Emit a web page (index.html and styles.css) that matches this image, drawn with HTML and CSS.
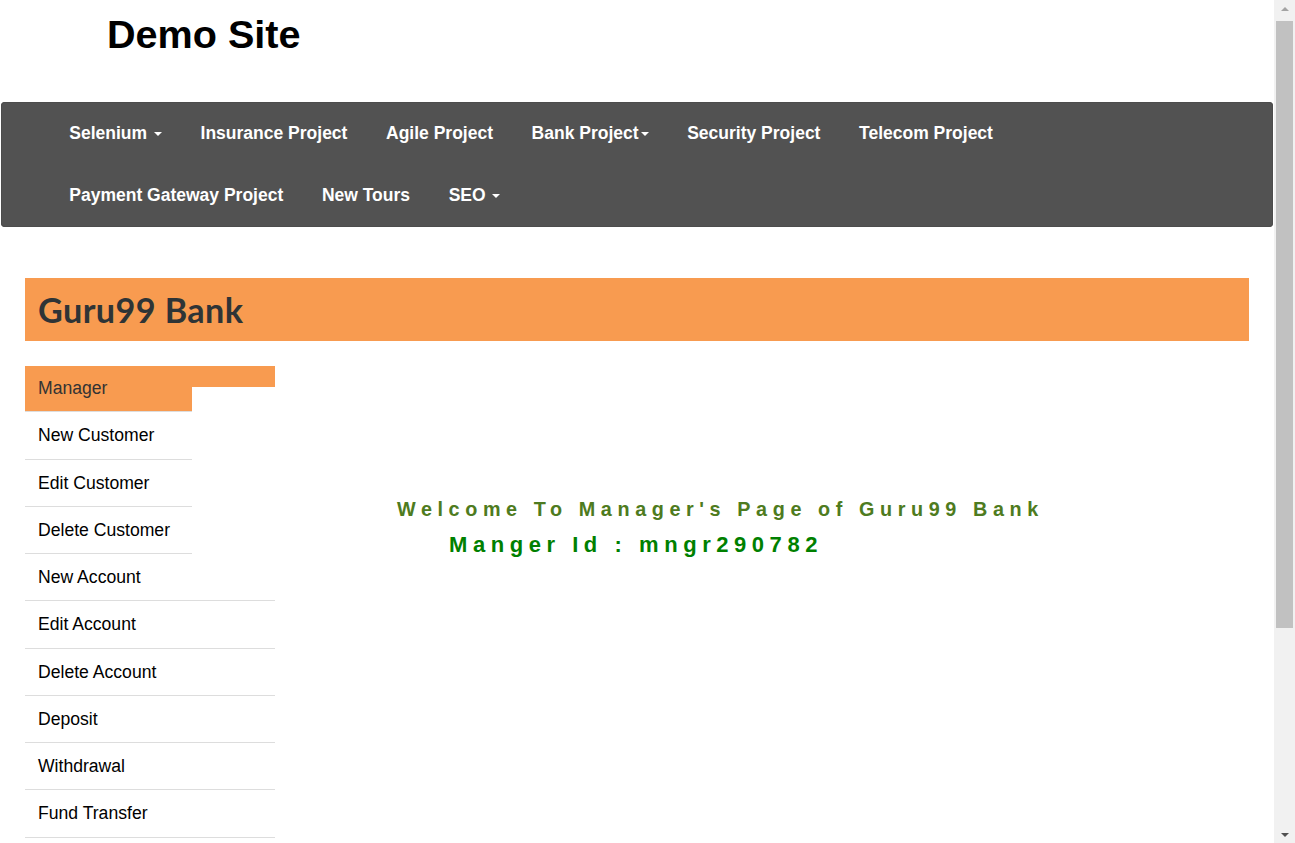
FILE: index.html
```html
<!DOCTYPE html>
<html lang="en">
<head>
<meta charset="utf-8">
<title>Guru99 Bank Manager HomePage</title>
<link rel="stylesheet" href="styles.css">
</head>
<body>
  <div class="page">
    <header class="site-header">
      <h1 class="site-title">Demo Site</h1>
    </header>

    <nav class="navbar">
      <ul class="nav-list">
        <li><a class="nav-link" href="#">Selenium <span class="caret"></span></a></li>
        <li><a class="nav-link" href="#">Insurance Project</a></li>
        <li><a class="nav-link" href="#">Agile Project</a></li>
        <li><a class="nav-link" href="#">Bank Project<span class="caret"></span></a></li>
        <li><a class="nav-link" href="#">Security Project</a></li>
        <li><a class="nav-link" href="#">Telecom Project</a></li>
        <li><a class="nav-link" href="#">Payment Gateway Project</a></li>
        <li><a class="nav-link" href="#">New Tours</a></li>
        <li><a class="nav-link" href="#">SEO <span class="caret"></span></a></li>
      </ul>
    </nav>

    <div class="bank-wrap">
      <div class="bank-banner">
        <h2 class="bank-title">Guru99 Bank</h2>
      </div>

      <div class="bank-body">
        <aside class="menu">
          <div class="menu-head">
            <a class="menu-item menu-active" href="#">Manager</a>
            <span class="menu-head-fill"></span>
          </div>
          <a class="menu-item menu-narrow" href="#">New Customer</a>
          <a class="menu-item menu-narrow" href="#">Edit Customer</a>
          <a class="menu-item menu-narrow" href="#">Delete Customer</a>
          <a class="menu-item" href="#">New Account</a>
          <a class="menu-item" href="#">Edit Account</a>
          <a class="menu-item" href="#">Delete Account</a>
          <a class="menu-item" href="#">Deposit</a>
          <a class="menu-item" href="#">Withdrawal</a>
          <a class="menu-item" href="#">Fund Transfer</a>
        </aside>

        <main class="content">
          <p class="welcome">Welcome To Manager's Page of Guru99 Bank</p>
          <p class="manager-id">Manger Id : mngr290782</p>
        </main>
      </div>
    </div>
  </div>

  <div class="scrollbar" aria-hidden="true">
    <div class="sb-btn sb-up"><span class="sb-arrow-up"></span></div>
    <div class="sb-track"><div class="sb-thumb"></div></div>
    <div class="sb-btn sb-down"><span class="sb-arrow-down"></span></div>
  </div>
</body>
</html>
```

FILE: styles.css
```css
html, body {
  margin: 0;
  padding: 0;
  height: 100%;
  overflow: hidden;
}

body {
  font-family: "Liberation Sans", Arial, sans-serif;
  color: #000;
  background: #fff;
  display: flex;
}

.page {
  flex: 1;
  min-width: 0;
  overflow: hidden;
}

.site-header {
  height: 102px;
  padding-left: 107px;
  box-sizing: border-box;
}

.site-title {
  margin: 0;
  padding-top: 11px;
  font-size: 39.6px;
  line-height: 46px;
  font-weight: bold;
  color: #000;
}

.navbar {
  margin: 0 1px 0 1px;
  background: #525252;
  border-radius: 4px;
  height: 125px;
  box-sizing: border-box;
  box-shadow: inset 0 0 0 1px #4c4c4c;
}

.nav-list {
  list-style: none;
  margin: 0;
  padding: 0 0 0 49px;
  display: flex;
  flex-wrap: wrap;
  max-width: 970px;
}

.nav-list li {
  display: block;
}

.nav-link {
  display: flex;
  align-items: center;
  height: 62px;
  padding: 0 19.3px;
  color: #fff;
  font-weight: bold;
  font-size: 17.5px;
  text-decoration: none;
  white-space: pre;
}

.caret {
  display: inline-block;
  width: 0;
  height: 0;
  margin-left: 2px;
  margin-top: 2px;
  border-top: 4.5px solid #fff;
  border-left: 4.5px solid transparent;
  border-right: 4.5px solid transparent;
}

.bank-wrap {
  padding: 51px 25px 0 25px;
}

.bank-banner {
  background: #f89b50;
  height: 63px;
  display: flex;
  align-items: center;
  padding-left: 13px;
}

.bank-title {
  margin: 0;
  font-family: "Lato", "Open Sans", sans-serif;
  font-weight: bold;
  font-size: 34.2px;
  color: #2f3436;
  letter-spacing: 0.4px;
}

.bank-body {
  display: flex;
  padding-top: 25px;
}

.menu {
  width: 250px;
  flex: none;
  display: flex;
  flex-direction: column;
}

.menu-head {
  display: flex;
  align-items: flex-start;
}

.menu-head-fill {
  flex: 1;
  height: 21px;
  background: #f89b50;
}

.menu-item {
  display: block;
  padding: 11px 0 11px 13px;
  line-height: 24.25px;
  font-size: 17.6px;
  color: #000;
  text-decoration: none;
  border-bottom: 1px solid #dddddd;
}

.menu-active {
  width: 167px;
  box-sizing: border-box;
  background: #f89b50;
  color: #333;
  padding-top: 10px;
  padding-bottom: 11px;
}

.menu-narrow {
  width: 167px;
  box-sizing: border-box;
}

.content {
  flex: 1;
  padding-top: 131px;
}

.welcome {
  margin: 0;
  padding-left: 122px;
  font-weight: bold;
  font-size: 19.8px;
  line-height: 24px;
  letter-spacing: 5.6px;
  color: #4e7b20;
  white-space: nowrap;
}

.manager-id {
  margin: 12px 0 0;
  padding-left: 174px;
  font-weight: bold;
  font-size: 22px;
  line-height: 24px;
  letter-spacing: 5.55px;
  color: #008000;
  white-space: nowrap;
}

/* drawn scrollbar column */
.scrollbar {
  width: 21px;
  flex: none;
  height: 100%;
  background: #f1f1f1;
  display: flex;
  flex-direction: column;
}

.sb-btn {
  height: 17px;
  flex: none;
  display: flex;
  align-items: center;
  justify-content: center;
}

.sb-arrow-up {
  width: 0;
  height: 0;
  border-bottom: 4px solid #a3a3a3;
  border-left: 4px solid transparent;
  border-right: 4px solid transparent;
}

.sb-arrow-down {
  width: 0;
  height: 0;
  border-top: 4px solid #505050;
  border-left: 4px solid transparent;
  border-right: 4px solid transparent;
}

.sb-track {
  flex: 1;
  padding: 4px 2px 0 2px;
}

.sb-thumb {
  height: 607px;
  background: #c1c1c1;
}
```
